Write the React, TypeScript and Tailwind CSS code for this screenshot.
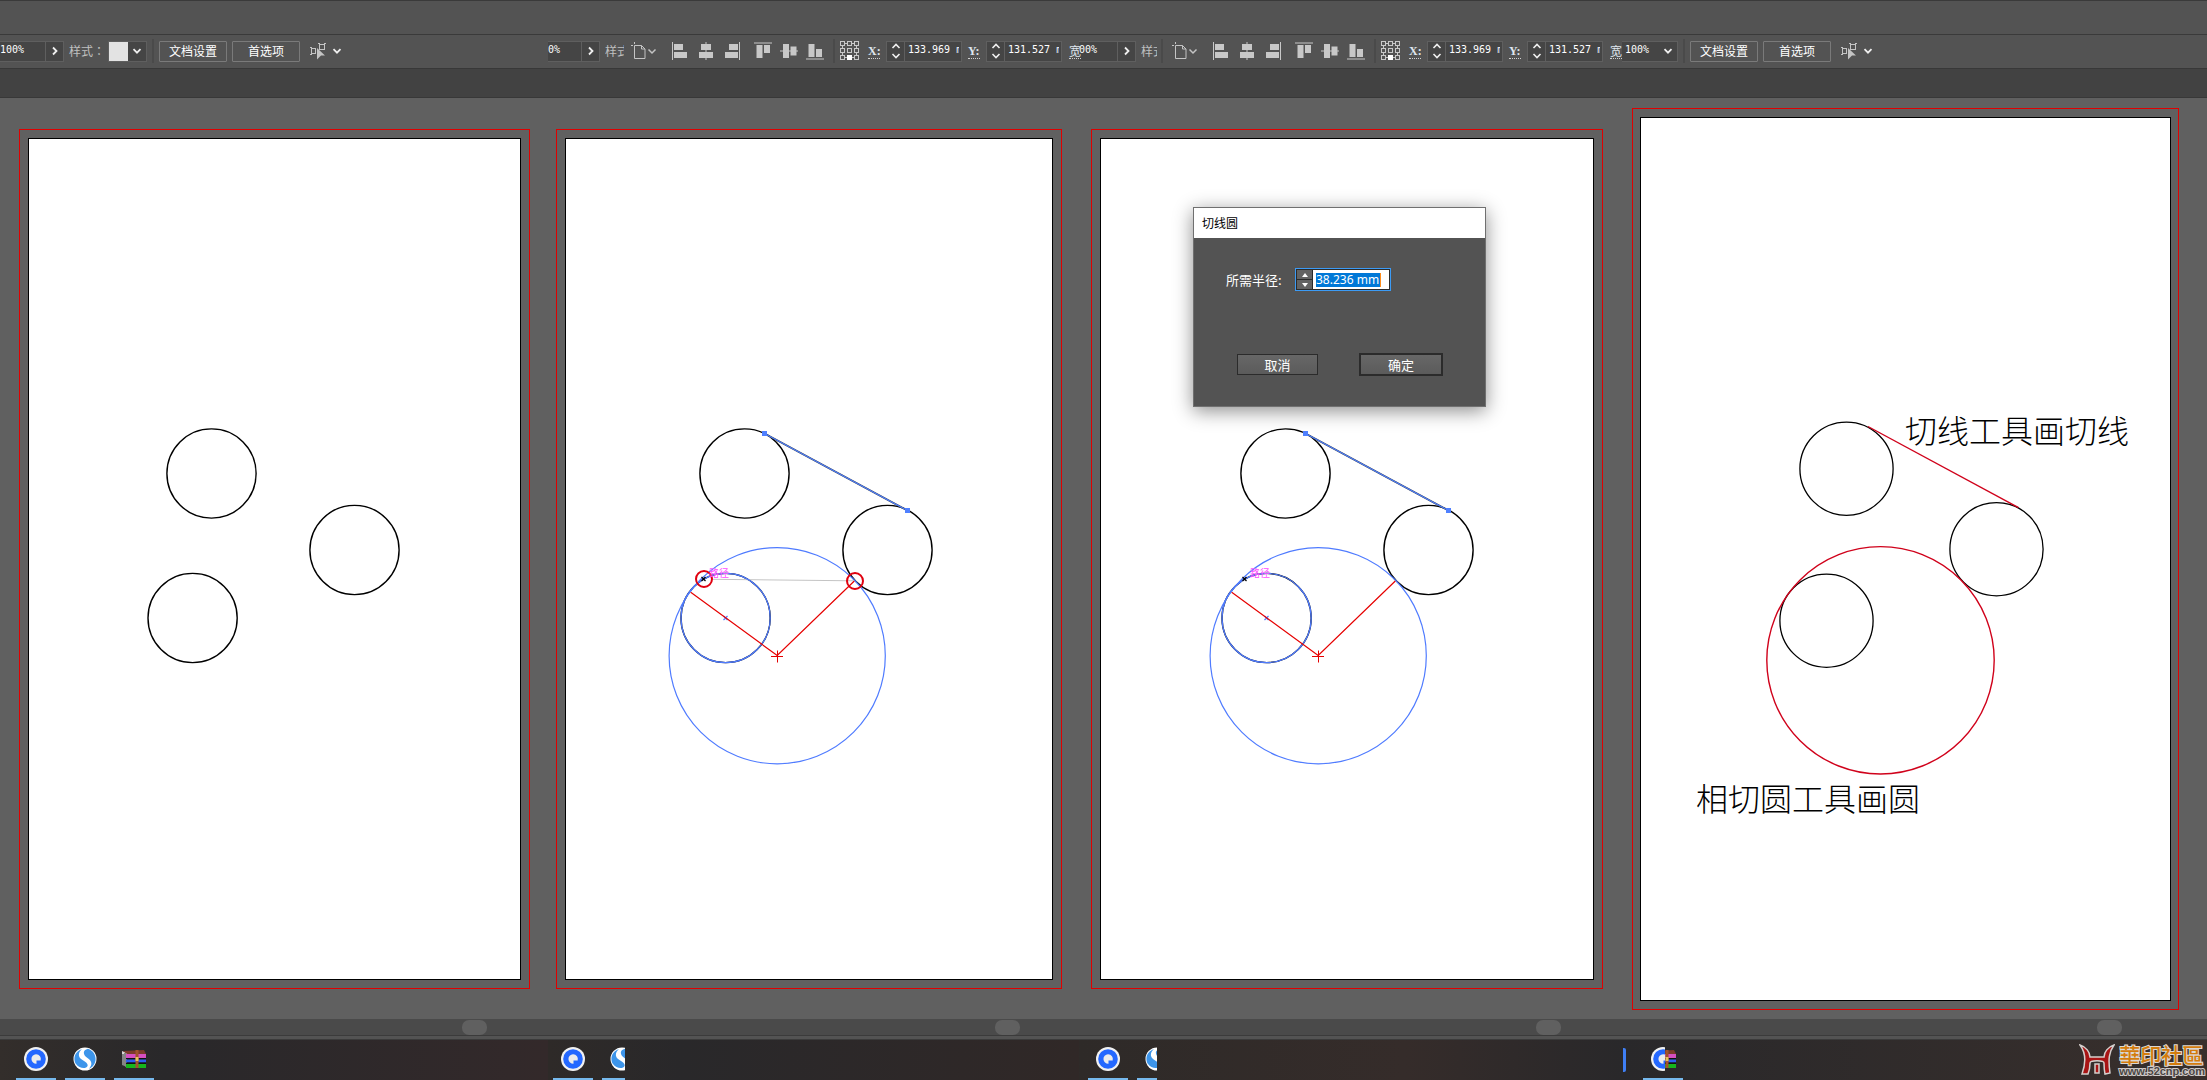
import * as React from 'react';
import { useId } from 'react';
import clsx from 'clsx';

// 下拉箭头
function Chevron({ right = false }: { right?: boolean }) {
  return (
    <svg viewBox="0 0 10 10" className="h-[10px] w-[10px] shrink-0" fill="none" stroke="#f0f0f0" strokeWidth="1.8">
      <path d={right ? 'M3 1.5 L6.5 5 L3 8.5' : 'M1.5 3.2 L5 6.7 L8.5 3.2'} />
    </svg>
  );
}

function Separator() {
  return <span className="h-[24px] w-[2px] shrink-0 bg-[#4a4a4a]" />;
}

// 百分比输入框
function PercentField({ value, className, right = true }: { value: string; className: string; right?: boolean }) {
  return (
    <div className="flex h-[21px] shrink-0 border-y border-r border-[#5f5f5f] bg-[#454545]">
      <input
        aria-label="不透明度"
        defaultValue={value}
        className={clsx('min-w-0 bg-transparent pb-[2px] font-["DejaVu_Sans_Mono"] text-[10px] leading-4 text-white outline-none', className)}
      />
      <button
        aria-label="展开"
        className={clsx('flex w-[18px] items-center justify-center', right && 'border-l border-[#5f5f5f]')}
      >
        <Chevron right={right} />
      </button>
    </div>
  );
}

// 文档设置 / 首选项
function DocumentButtons() {
  return (
    <>
      <Separator />
      <button className="ml-[5px] h-[21px] w-[68px] shrink-0 rounded-[1px] border border-[#7a7a7a] text-[12px] leading-none text-white">
        文档设置
      </button>
      <button className="ml-[5px] h-[21px] w-[68px] shrink-0 rounded-[1px] border border-[#7a7a7a] text-[12px] leading-none text-white">
        首选项
      </button>
      <button aria-label="选择类似对象" className="ml-[10px] flex shrink-0 items-center gap-[5px]">
        <svg viewBox="0 0 17 18" className="h-[18px] w-[17px]" fill="none" stroke="#c4c4c4">
          <rect x="1.5" y="6.5" width="4" height="5" />
          <rect x="9.5" y="2.5" width="5" height="5" />
          <path d="M0 5.5h2M0 12.5h2M8 1.5h2M14 1.5h2" />
          <path d="M7 6 L15 13.5 H11 L7 17.5 Z" fill="#c4c4c4" stroke="none" />
        </svg>
        <Chevron />
      </button>
    </>
  );
}

// X / Y 坐标输入
function CoordField({ label, value }: { label: string; value: string }) {
  const id = useId();
  return (
    <div className="flex shrink-0 items-center gap-[6px]">
      <label
        htmlFor={id}
        className="w-[12px] border-b border-dotted border-[#d0d0d0] font-['Liberation_Serif'] text-[12px] leading-[14px] font-bold whitespace-nowrap text-[#dfe6ee]"
      >
        {label}
      </label>
      <div className="flex h-[21px] w-[76px] border border-[#5f5f5f] bg-[#454545]">
        <button aria-label={`${label} 步进`} className="flex w-[18px] shrink-0 items-center justify-center border-r border-[#5f5f5f]">
          <svg viewBox="0 0 10 16" className="h-4 w-[10px]" fill="none" stroke="#f0f0f0" strokeWidth="1.6">
            <path d="M1.5 5 L5 1.5 L8.5 5 M1.5 11 L5 14.5 L8.5 11" />
          </svg>
        </button>
        <input
          id={id}
          defaultValue={value}
          className="mr-[2px] min-w-0 flex-1 bg-transparent pb-[2px] pl-[3px] font-['DejaVu_Sans_Mono'] text-[10px] leading-4 text-white outline-none"
        />
      </div>
    </div>
  );
}

const horizontalIcons = [
  { name: '左对齐', d: 'M3 2h9v6H3z M3 10h13v6H3z M1 0h1v18H1z' },
  { name: '水平居中', d: 'M4 2h10v6H4z M2 10h14v6H2z M8.5 0h1v18h-1z' },
  { name: '右对齐', d: 'M6 2h9v6H6z M2 10h13v6H2z M16 0h1v18h-1z' },
];

const verticalIcons = [
  { name: '顶对齐', d: 'M2.5 3h6v13h-6z M10 3h6v8h-6z M0 0.5h18v1H0z' },
  { name: '垂直居中', d: 'M3 2h6v14H3z M10.5 4.5h6v9h-6z M0 8.5h18v1H0z' },
  { name: '底对齐', d: 'M2.5 2h6v13h-6z M10 7h6v8h-6z M0 16.5h18v1H0z' },
];

function AlignGroup({ icons }: { icons: typeof horizontalIcons }) {
  return (
    <div className="flex shrink-0 gap-2">
      {icons.map((icon) => (
        <button key={icon.name} aria-label={icon.name}>
          <svg viewBox="0 0 18 18" className="block h-[18px] w-[18px]" fill="#c8c8c8">
            <path d={icon.d} />
          </svg>
        </button>
      ))}
    </div>
  );
}

// 九宫格参考点
function ReferencePoint() {
  const cells = [0.5, 7.5, 14.5];
  return (
    <svg viewBox="0 0 20 20" className="ml-[5px] h-[20px] w-[20px] shrink-0" fill="none" stroke="#c8c8c8">
      <path d="M5 2.5h2M12 2.5h2M5 16.5h2M12 16.5h2M2.5 5v2M2.5 12v2M16.5 5v2M16.5 12v2" />
      {cells.map((y) =>
        cells.map((x) => {
          const active = x === 7.5 && y === 14.5;
          return <rect key={`${x}-${y}`} x={x} y={y} width="4" height="4" fill={active ? '#fff' : 'none'} stroke={active ? '#fff' : '#c8c8c8'} />;
        })
      )}
    </svg>
  );
}

// 对齐与变换工具
function AlignTools() {
  return (
    <>
      <button aria-label="画板选项" className="shrink-0">
        <svg viewBox="0 0 26 18" className="block h-[18px] w-[26px]" fill="none" stroke="#c4c4c4">
          <path d="M3.5 3.5h7l3.5 3.5v9.500h-10.5z M10.5 3.5v3.5h3.5" />
          <path d="M0 3.5h2M3.5 0v2" />
          <path d="M17.500 7.500 L21 11 L24.500 7.500" strokeWidth="1.5" />
        </svg>
      </button>
      <div className="ml-[14px] flex shrink-0 gap-[13px]">
        <AlignGroup icons={horizontalIcons} />
        <AlignGroup icons={verticalIcons} />
      </div>
      <div className="ml-[9px] flex shrink-0 items-center">
        <Separator />
        <ReferencePoint />
      </div>
      <div className="ml-[8px] flex shrink-0 gap-[6px]">
        <CoordField label="X:" value="133.969 mm" />
        <CoordField label="Y:" value="131.527 mm" />
      </div>
      <span className="relative z-10 ml-[7px] w-[12px] shrink-0 border-b border-dotted border-[#d0d0d0] text-[12px] leading-[14px] text-[#dfe6ee]">
        宽
      </span>
    </>
  );
}

function Toolbar() {
  return (
    <div className="grid h-[33px] grid-cols-[548fr_531fr_543fr_585fr] pb-px text-[12px] text-[#c0c0c0]">
      <div className="flex min-w-0 items-center">
        <PercentField value="100%" className="w-[45px]" />
        <span className="ml-[5px] w-[39px] shrink-0 font-['Noto_Sans_CJK_TC']">样式：</span>
        <button aria-label="样式" className="mr-[5px] flex h-[21px] w-[39px] shrink-0 items-center border border-[#5f5f5f] bg-[#454545]">
          <span className="h-full w-[19px] bg-[#e3e3e3]" />
          <span className="flex flex-1 justify-center">
            <Chevron />
          </span>
        </button>
        <DocumentButtons />
      </div>
      <div className="flex min-w-0 items-center">
        <PercentField value="0%" className="w-[33px]" />
        <span className="mr-[7px] ml-[5px] w-[19px] shrink-0 overflow-hidden whitespace-nowrap">样式</span>
        <AlignTools />
      </div>
      <div className="flex min-w-0 items-center">
        <PercentField value="00%" className="w-[38px]" />
        <span className="mr-[4px] ml-[5px] w-[16px] shrink-0 overflow-hidden whitespace-nowrap">样式</span>
        <Separator />
        <span className="w-[9px] shrink-0" />
        <AlignTools />
      </div>
      <div className="flex min-w-0 items-center">
        <PercentField value="100%" className="w-[37px] pl-[3px]" right={false} />
        <span className="w-[5px] shrink-0" />
        <DocumentButtons />
      </div>
    </div>
  );
}

// 三个基础圆
function BaseCircles() {
  return (
    <g fill="none" stroke="#000" strokeWidth="1.4">
      <circle cx="178.5" cy="334.5" r="44.6" />
      <circle cx="321.5" cy="411" r="44.6" />
      <circle cx="159.6" cy="479" r="44.6" />
    </g>
  );
}

// 选中状态下的切线与相切圆
function SelectedPaths({ marks = false }: { marks?: boolean }) {
  return (
    <g fill="none">
      {marks && <path d="M147 440.3 L287 441.8" stroke="#c4c4c4" />}
      <path d="M198.5 294.5 L341.5 371.5" stroke="#333" strokeWidth="1.8" />
      <path d="M198.5 294.5 L341.5 371.5" stroke="#4f80ff" strokeWidth="1.3" />
      <path d="M196 292h5v5h-5z M339 369h5v5h-5z" fill="#4f80ff" />
      <g stroke="#4f7bff" strokeWidth="1.2">
        <circle cx="159.6" cy="479" r="44.6" />
        <circle cx="211.2" cy="516.7" r="108.1" />
        <path d="M157.5 477l4 4M161.5 477l-4 4" />
      </g>
      <path d="M124.7 453.3 L211.2 516.5 L288.3 442" stroke="#e60000" strokeWidth="1.2" />
      <path d="M205 517.5h12M211.5 511.5v12" stroke="#e60000" />
      {marks && (
        <g stroke="#e0000f" strokeWidth="2">
          <circle cx="138" cy="440" r="8" />
          <circle cx="289" cy="442" r="8" />
        </g>
      )}
      <path d="M135.5 438l4 4M139.5 438l-4 4" stroke="#000" strokeWidth="1.2" />
      <text x="143" y="438" fontSize="10" fill="#ff4dff">
        路径
      </text>
    </g>
  );
}

function Artboard({ viewBox, wide = false, children }: { viewBox: string; wide?: boolean; children: React.ReactNode }) {
  return (
    <div className={clsx('w-full border border-[#e00000]', wide ? 'px-[7px] py-2' : 'p-2')}>
      <div className="border border-black bg-white">
        <svg viewBox={viewBox} className="block h-auto w-full">
          {children}
        </svg>
      </div>
    </div>
  );
}

// 切线圆对话框
function TangentDialog() {
  const id = useId();
  return (
    <div
      role="dialog"
      aria-label="切线圆"
      className="absolute top-[78px] left-[117px] w-[293px] border border-[#707070] bg-[#535353] text-[13px] text-white shadow-[0_4px_18px_rgba(0,0,0,0.45)]"
    >
      <div className="flex h-[30px] items-center bg-white px-2 text-[12px] text-black">切线圆</div>
      <div className="flex h-[168px] flex-col justify-between pt-[30px] pb-[30px] pl-[32px]">
        <div className="flex items-center">
          <label htmlFor={id} className="w-[69px]">
            所需半径:
          </label>
          <div className="flex h-[23px] w-[96px] border border-[#3c9bf5] bg-[#2b2b2b] p-px">
            <div className="mr-px flex w-[15px] flex-col gap-px">
              <button aria-label="增加" className="flex flex-1 items-center justify-center bg-[#636363]">
                <svg viewBox="0 0 6 4" className="h-1 w-[6px]" fill="#fff">
                  <path d="M3 0 L6 4 H0 Z" />
                </svg>
              </button>
              <button aria-label="减少" className="flex flex-1 items-center justify-center bg-[#636363]">
                <svg viewBox="0 0 6 4" className="h-1 w-[6px]" fill="#fff">
                  <path d="M0 0 H6 L3 4 Z" />
                </svg>
              </button>
            </div>
            <div className="flex flex-1 items-center bg-white pl-[3px]">
              <input
                id={id}
                defaultValue="38.236 mm"
                className="h-[14px] w-[65px] border-r border-[#ff8c1a] bg-[#0078d7] font-['Noto_Sans'] text-[12px] leading-[14px] text-white outline-none"
              />
            </div>
          </div>
        </div>
        <div className="flex items-center gap-[41px] pl-[11px]">
          <button className="h-[21px] w-[81px] border border-[#2b2b2b] bg-linear-to-b from-[#676767] to-[#5b5b5b] leading-none">取消</button>
          <button className="h-[23px] w-[84px] border-2 border-[#2b2b2b] bg-linear-to-b from-[#676767] to-[#5b5b5b] leading-none">确定</button>
        </div>
      </div>
    </div>
  );
}

function Canvas() {
  return (
    <main className="grid flex-1 grid-cols-[543fr_533fr_542fr_589fr] items-center bg-[#606060] pt-[10px] pb-[9px]">
      <section className="pr-[13px] pl-[19px]">
        <Artboard viewBox="-4 0 491 840">
          <BaseCircles />
        </Artboard>
      </section>
      <section className="pr-[14px] pl-[13px]">
        <Artboard viewBox="0 0 486 840">
          <BaseCircles />
          <SelectedPaths marks />
        </Artboard>
      </section>
      <section className="relative px-[15px]">
        <Artboard viewBox="-6 0 492 840">
          <BaseCircles />
          <SelectedPaths />
        </Artboard>
        <TangentDialog />
      </section>
      <section className="pr-[28px] pl-[14px]">
        <Artboard viewBox="0 0 529 882" wide>
          <g fill="none" stroke="#000" strokeWidth="1.3">
            <circle cx="205.5" cy="350.7" r="46.6" />
            <circle cx="355.5" cy="431.2" r="46.6" />
            <circle cx="185.5" cy="502.7" r="46.6" />
          </g>
          <g fill="none" stroke="#d0021b" strokeWidth="1.4">
            <circle cx="239.5" cy="542.3" r="113.7" />
            <path d="M227 308.5 L377.5 389.7" />
          </g>
          <g fontSize="32" fontWeight="300" fill="#000">
            <text x="264" y="325">
              切线工具画切线
            </text>
            <text x="55" y="693">
              相切圆工具画圆
            </text>
          </g>
        </Artboard>
      </section>
    </main>
  );
}

// 水平滚动条
function ScrollTrack({ className }: { className: string }) {
  return (
    <div className={clsx('flex min-w-0 items-center justify-end', className)}>
      <span className="h-[15px] w-[25px] rounded-[7px] bg-[#606060]" />
    </div>
  );
}

function BrowserIcon() {
  return (
    <svg viewBox="0 0 24 24" className="block h-6 w-6 shrink-0">
      <circle cx="12" cy="12" r="12" fill="#f1f1f1" />
      <circle cx="12" cy="12" r="9.8" fill="#2468ff" />
      <path d="M12 7.2 A4.8 4.8 0 1 0 12.5 16.8 V13.500 H16.7 A4.8 4.8 0 0 0 12 7.2Z" fill="#ececec" />
    </svg>
  );
}

function SogouIcon() {
  return (
    <svg viewBox="0 0 24 24" className="block h-6 w-6 shrink-0">
      <circle cx="12" cy="12" r="11.5" fill="#fff" />
      <path d="M9 2.2 C2 4 -.5 12 3 17 C6 21.5 13 22.5 14.5 19 C16 15 7 13.5 6 9 C5.5 6 7 3.5 9 2.2Z" fill="#3d95ea" />
      <path d="M15 1.8 C22 4 24.5 12 21 17.5 C19.5 20 17.5 21.2 16 21.7 C20 17 18.5 13.5 14.5 11 C9.5 8 9.5 3 15 1.8Z" fill="#3d95ea" />
    </svg>
  );
}

function RarIcon() {
  return (
    <svg viewBox="0 0 24 18" className="block h-[18px] w-6 shrink-0">
      <path d="M0 1 L5 3 V17 L0 15Z" fill="#d8d8d8" />
      <path d="M1 1 L22 0 L24 4 H5Z" fill="#7c3b2b" />
      <path d="M4 4h20v4H4z" fill="#d64fc0" />
      <path d="M4 8h20v1.500H4z" fill="#111" />
      <path d="M4 9.500h20v3H4z" fill="#2b5cf0" />
      <path d="M4 12.500h20v1.500H4z" fill="#111" />
      <path d="M4 14h20v4H4z" fill="#16b51c" />
      <path d="M1 4v12M3 3v13" stroke="#333" />
      <path d="M13.500 0h3v18h-3z" fill="#a0522d" />
      <path d="M13.500 7h3v4h-3z" fill="#e8c15a" />
    </svg>
  );
}

function TaskItem({ label, clip, children }: { label: string; clip?: string; children: React.ReactNode }) {
  return (
    <button
      aria-label={label}
      className={clsx('flex h-full shrink-0 items-center overflow-hidden border-b-2 border-[#76b9ed] pl-2', clip ?? 'w-[40px]')}
    >
      {children}
    </button>
  );
}

// 水印
function Watermark() {
  return (
    <div className="ml-auto flex items-center gap-1 pr-[2px]">
      <svg viewBox="0 0 36 34" className="h-[34px] w-[36px]" stroke="#d5cfcc" strokeWidth="1.5" fill="#a81414">
        <path d="M1 2 C7 4 11 9 11 14 H25 C25 9 29 4 35 2 C30 9 29 16 31 30 L26 31 C25 26 25 23 25 20 C25 17 11 17 11 20 C11 23 11 26 9 31 L3 31 C7 20 7 10 1 2Z" />
        <path d="M16 21h4v9h-4z" />
      </svg>
      <div className="whitespace-nowrap [paint-order:stroke]">
        <div className="font-['Noto_Sans_CJK_TC'] text-[21px] leading-[22px] font-medium text-[#d47c0c] [-webkit-text-stroke:2px_#dcd8d4]">
          華印社區
        </div>
        <div className="font-['Liberation_Sans'] text-[11px] leading-[12px] font-bold text-[#4a4543] [-webkit-text-stroke:2px_#cfcac8]">
          www.52cnp.com
        </div>
      </div>
    </div>
  );
}

function Taskbar() {
  return (
    <footer className="grid h-[41px] grid-cols-[548fr_531fr_543fr_585fr] border-t border-[#3b3b3b]">
      <div className="flex min-w-0 gap-[9px] bg-linear-to-r from-[#332e2b] via-[#29282a] via-30% to-[#33292a] pl-4">
        <TaskItem label="浏览器">
          <BrowserIcon />
        </TaskItem>
        <TaskItem label="搜狗">
          <SogouIcon />
        </TaskItem>
        <TaskItem label="压缩文件">
          <RarIcon />
        </TaskItem>
      </div>
      <div className="flex min-w-0 gap-[9px] bg-linear-to-r from-[#2e2a28] via-[#29282a] via-25% to-[#302827] pl-[5px]">
        <TaskItem label="浏览器">
          <BrowserIcon />
        </TaskItem>
        <TaskItem label="搜狗" clip="w-[23px]">
          <SogouIcon />
        </TaskItem>
      </div>
      <div className="flex min-w-0 gap-[9px] bg-linear-to-r from-[#2e2a28] via-[#352c2a] via-60% to-[#29282a] pl-[9px]">
        <TaskItem label="浏览器">
          <BrowserIcon />
        </TaskItem>
        <TaskItem label="搜狗" clip="w-[20px]">
          <SogouIcon />
        </TaskItem>
      </div>
      <div className="flex min-w-0 items-center bg-linear-to-r from-[#29282a] to-[#382f2c] pl-px">
        <span className="mr-[17px] h-6 w-[3px] shrink-0 rounded-r-[2px] bg-[#3f7ff5]" />
        <TaskItem label="浏览器与压缩文件">
          <span className="w-[14px] shrink-0 overflow-hidden">
            <BrowserIcon />
          </span>
          <span className="flex w-[11px] shrink-0 justify-end overflow-hidden">
            <RarIcon />
          </span>
        </TaskItem>
        <Watermark />
      </div>
    </footer>
  );
}

export default function App() {
  return (
    <div className="flex min-h-screen flex-col overflow-hidden bg-[#535353] font-['Noto_Sans_CJK_SC',sans-serif]">
      <header>
        <div className="h-[35px] border-y border-[#3a3a3a]" />
        <Toolbar />
        <div className="h-[30px] border-y border-[#383838] bg-[#424242]" />
      </header>
      <Canvas />
      <div className="grid h-[17px] grid-cols-[548fr_531fr_543fr_585fr] border-b border-[#3b3b3b] bg-[#4a4a4a]">
        <ScrollTrack className="pr-[61px]" />
        <ScrollTrack className="pr-[59px]" />
        <ScrollTrack className="pr-[61px]" />
        <ScrollTrack className="pr-[85px]" />
      </div>
      <div className="h-[3px]" />
      <Taskbar />
    </div>
  );
}
